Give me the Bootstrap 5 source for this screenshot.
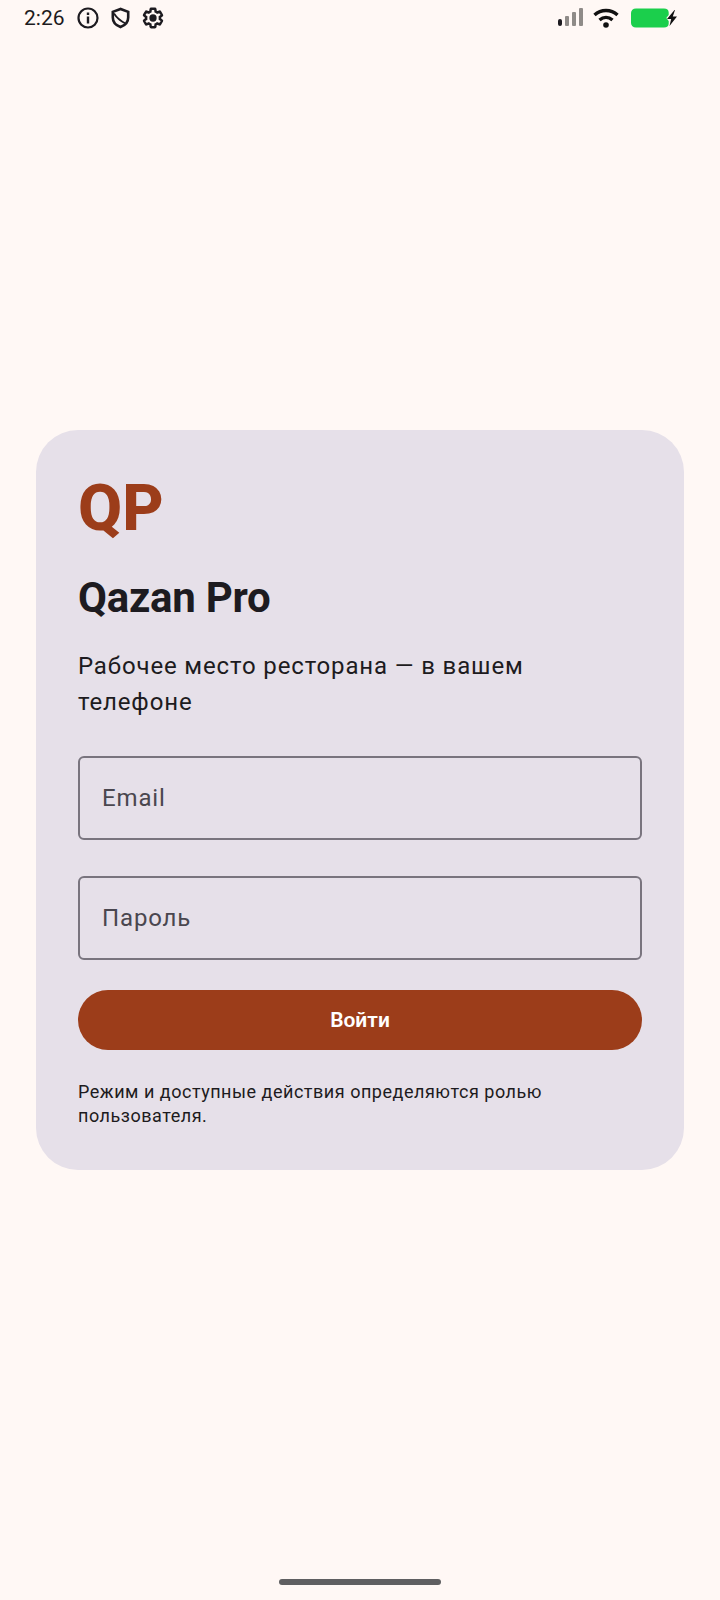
<!DOCTYPE html>
<html lang="ru">
<head>
    <meta charset="UTF-8">
    <meta name="viewport" content="width=device-width, initial-scale=1.0">
    <title>Qazan Pro</title>
    <link href="https://cdn.jsdelivr.net/npm/bootstrap@5.3.0/dist/css/bootstrap.min.css" rel="stylesheet">
    <style>
        body {
            background: #FFF8F5;
            font-family: Roboto, "Liberation Sans", sans-serif;
            color: #1D1B20;
        }
        .screen { min-height: 1600px; }
        .status-bar { height: 36px; padding: 0 42px 0 24px; }
        .status-time { font-size: 21px; line-height: 36px; color: #1D1B20; width: 44px; }
        .status-left { gap: 8px; }
        .gear-icon { margin-left: 1px; }
        .sig-icon { margin-right: 9px; }
        .wifi-icon { margin-right: 11px; }
        .login-wrap { padding: 0 36px; }
        .login-card {
            background: #E6E0E9;
            border: 0;
            border-radius: 42px;
            padding: 42px;
        }
        .logo-mark { font-size: 64px; line-height: 72px; font-weight: 800; color: #9C3D1A; margin-top: 1px; }
        .app-title { font-size: 42px; line-height: 54px; font-weight: 700; letter-spacing: -.25px; color: #1D1B20; margin: 26px 0 0; }
        .app-sub { font-size: 24px; line-height: 36px; letter-spacing: .86px; margin: 23px 0 36px; max-width: 500px; }
        .field {
            height: 84px;
            background: transparent;
            border: 2px solid #79747E;
            border-radius: 6px;
            padding: 0 22px;
            font-size: 24px;
            letter-spacing: .85px;
            margin-bottom: 36px;
        }
        .field::placeholder { color: #4A474F; opacity: 1; }
        .field-last { margin-bottom: 30px; }
        .btn-enter {
            height: 60px;
            background: #9C3D1A;
            border: 0;
            border-radius: 30px;
            color: #fff;
            font-size: 21px;
            font-weight: 600;
            padding-top: 7px;
        }
        .note { font-size: 18px; line-height: 24px; letter-spacing: .52px; margin: 30px 0 0; }
        .home-area { height: 36px; }
        .home-pill { width: 162px; height: 6px; background: #5F5F61; border-radius: 3px; margin-top: 15px; }
    </style>
</head>
<body>
    <div class="screen d-flex flex-column">
        <div class="status-bar d-flex align-items-center justify-content-between">
            <div class="d-flex align-items-center status-left">
                <span class="status-time">2:26</span>
                <svg width="24" height="24" viewBox="0 0 24 24" fill="none" stroke="#1D1B20">
                    <circle cx="12" cy="12" r="9.5" stroke-width="2.2"/>
                    <path d="M12 10.500v7M12 6.500v2.400" stroke-width="2.400"/>
                </svg>
                <svg width="24" height="24" viewBox="0 0 24 24" fill="none" stroke="#1D1B20" stroke-width="2.600">
                    <path d="M12.500 3 4.800 5.800v5.700c0 4.700 3.100 7.900 7.700 9.500 4.600-1.600 7.700-4.800 7.700-9.500V5.800z"/>
                    <path d="M6 7.500c2.500 4 5.500 7 11.500 10" stroke-width="1.800"/>
                </svg>
                <svg width="24" height="24" viewBox="-.5 -.5 25 25" fill="none" stroke="#1D1B20" stroke-width="2.600" class="gear-icon">
                    <path d="M19.140 12.940c.04-.3.06-.61.06-.94 0-.32-.02-.64-.07-.94l2.030-1.580a.49.49 0 0 0 .12-.61l-1.920-3.320a.488.488 0 0 0-.59-.22l-2.390.96c-.5-.38-1.030-.7-1.620-.94l-.36-2.540a.484.484 0 0 0-.48-.41h-3.840c-.24 0-.43.17-.47.41l-.36 2.540c-.59.24-1.130.57-1.620.94l-2.390-.96c-.22-.08-.47 0-.59.22L2.740 8.870c-.12.21-.08.47.12.61l2.030 1.580c-.05.3-.09.63-.09.94s.02.64.07.94l-2.030 1.580a.49.49 0 0 0-.12.61l1.920 3.320c.12.22.37.29.59.22l2.390-.96c.5.38 1.030.7 1.620.94l.36 2.540c.05.24.24.41.48.41h3.840c.24 0 .44-.17.47-.41l.36-2.540c.59-.24 1.130-.56 1.620-.94l2.390.96c.22.08.47 0 .59-.22l1.920-3.320c.12-.22.07-.47-.12-.61l-2.010-1.580z"/>
                    <circle cx="12" cy="12" r="3.800" fill="#1D1B20" stroke="none"/>
                </svg>
            </div>
            <div class="d-flex align-items-center">
                <svg width="27" height="20" viewBox="0 0 27 20" class="sig-icon">
                    <rect x="1" y="11" width="4" height="7" rx="2" fill="#1D1B20"/>
                    <rect x="8" y="8" width="4" height="10" rx="1" fill="#8F8B88"/>
                    <rect x="15" y="4" width="4" height="14" rx="1" fill="#8F8B88"/>
                    <rect x="22" y="0" width="4" height="18" rx="1" fill="#8F8B88"/>
                </svg>
                <svg width="26" height="20" viewBox="0 0 26 20" fill="none" stroke="#111" stroke-width="3.400" class="wifi-icon">
                    <path d="M1.500 7C8 1 18 1 24.500 7"/>
                    <path d="M6.500 12C10.500 8.500 15.500 8.500 19.500 12"/>
                    <circle cx="13" cy="17" r="2.800" fill="#111" stroke="none"/>
                </svg>
                <svg width="48" height="20" viewBox="0 0 48 20">
                    <path d="M6 .5h28c3 0 4.700 1.500 4.700 4v2.500l-2.400 3 2.400 3V15.500c0 2.500-1.700 4-4.700 4H6c-3 0-5-1.800-5-4.500v-10C1 2.300 3 .5 6 .5z" fill="#1BCF4C"/>
                    <path d="M44.500 2 37 11h4.200l-1.700 7 7.500-9.500h-4.200l2.200-6.500z" fill="#111"/>
                </svg>
            </div>
        </div>

        <div class="login-wrap flex-grow-1 d-flex flex-column justify-content-center">
            <div class="card login-card">
                <div class="logo-mark">QP</div>
                <h1 class="app-title">Qazan Pro</h1>
                <p class="app-sub">Рабочее место ресторана — в вашем телефоне</p>
                <input type="email" class="form-control field" placeholder="Email">
                <input type="password" class="form-control field field-last" placeholder="Пароль">
                <button class="btn btn-enter w-100">Войти</button>
                <p class="note">Режим и доступные действия определяются ролью пользователя.</p>
            </div>
        </div>

        <div class="home-area d-flex justify-content-center">
            <div class="home-pill"></div>
        </div>
    </div>
    <script src="https://cdn.jsdelivr.net/npm/bootstrap@5.3.0/dist/js/bootstrap.bundle.min.js"></script>
</body>
</html>
